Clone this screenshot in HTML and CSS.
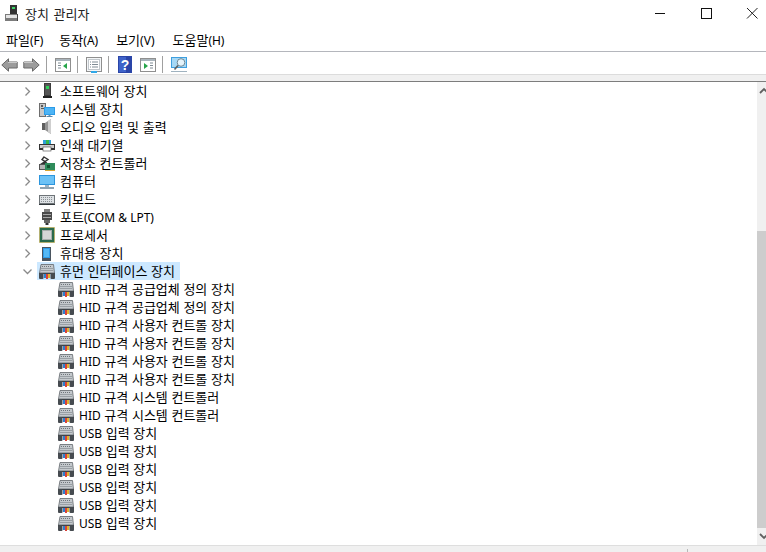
FILE: index.html
```html
<!DOCTYPE html>
<html lang="ko">
<head>
<meta charset="utf-8">
<title>장치 관리자</title>
<link rel="stylesheet" href="styles.css">
</head>
<body>
<svg class="defs" width="0" height="0" aria-hidden="true">
  <defs>
    <symbol id="i-app" viewBox="0 0 16 16">
      <rect x="5" y="0" width="7" height="9" fill="#333"/>
      <rect x="7" y="2" width="3" height="2" fill="#3fd468"/>
      <rect x="0" y="9" width="13" height="7" fill="#7b7b7b"/>
      <rect x="1" y="10" width="11" height="3" fill="#e4e4e4"/>
      <rect x="12" y="9" width="1" height="7" fill="#444"/>
    </symbol>
    <symbol id="i-tower" viewBox="0 0 16 16">
      <rect x="5" y="0" width="7" height="13" fill="#3c3c3c"/>
      <rect x="6" y="1" width="5" height="11" fill="#565656"/>
      <rect x="7" y="3" width="3" height="3" fill="#2fd35a"/>
      <rect x="4" y="13" width="9" height="2" fill="#222"/>
    </symbol>
    <symbol id="i-system" viewBox="0 0 16 16">
      <rect x="0.500" y="2.500" width="6" height="13" fill="#c9c9c9" stroke="#6e6e6e"/>
      <rect x="2" y="4" width="2" height="2" fill="#5a5a5a"/>
      <rect x="2" y="7" width="3" height="1" fill="#5a5a5a"/>
      <rect x="5" y="6" width="11" height="8" fill="#2b9be8"/>
      <rect x="6" y="7" width="9" height="6" fill="#4db4f5"/>
      <rect x="9.500" y="14" width="2" height="1" fill="#6a8fa8"/>
      <rect x="7.500" y="15" width="6" height="1" fill="#5a89ab"/>
    </symbol>
    <symbol id="i-audio" viewBox="0 0 16 16">
      <path d="M3 4h3v7H3z" fill="#5f5f5f"/>
      <path d="M6 4l6-4v15l-6-4z" fill="#949494"/>
      <path d="M9 2l3-2v15l-3-2z" fill="#cfcfcf"/>
    </symbol>
    <symbol id="i-printer" viewBox="0 0 16 16">
      <rect x="4" y="3" width="8" height="4" fill="#2f9fd8"/>
      <rect x="7" y="3" width="3" height="4" fill="#35b84f"/>
      <rect x="0.500" y="7.500" width="15" height="5" fill="#cfcfcf" stroke="#333"/>
      <rect x="1" y="11" width="14" height="2" fill="#333"/>
      <rect x="4" y="10" width="8" height="4" fill="#fff" stroke="#444" stroke-width=".6"/>
    </symbol>
    <symbol id="i-storage" viewBox="0 0 16 16">
      <path d="M5 2l4 2.500-3 2 2 2H3l3-2-3-2z" fill="none" stroke="#333" stroke-width="1.400"/>
      <rect x="0.500" y="9.500" width="7" height="5" fill="#b5b5b5" stroke="#555"/>
      <rect x="6" y="8" width="10" height="7" fill="#2f8c5b"/>
      <rect x="8" y="10" width="3" height="3" fill="#14532f"/>
      <rect x="6" y="15" width="10" height="1" fill="#d9a531"/>
    </symbol>
    <symbol id="i-computer" viewBox="0 0 16 16">
      <rect x="0" y="2" width="16" height="10" fill="#2c95dd"/>
      <rect x="1" y="3" width="14" height="8" fill="#6cc2f6"/>
      <rect x="6" y="12" width="4" height="2" fill="#9db4c4"/>
      <rect x="1" y="14" width="14" height="2" fill="#8ea3b2"/>
    </symbol>
    <symbol id="i-keyboard" viewBox="0 0 16 16">
      <rect x="0" y="4" width="16" height="10" fill="#6e7478"/>
      <rect x="1" y="5" width="14" height="7" fill="#dde1e4"/>
      <path d="M2 6.500h12M2 8.500h12M2 10.500h12" stroke="#8b9196" stroke-dasharray="1 1"/>
      <rect x="0" y="13" width="16" height="1" fill="#33393d"/>
    </symbol>
    <symbol id="i-port" viewBox="0 0 16 16">
      <rect x="5" y="0" width="6" height="3" fill="#808080"/>
      <rect x="3" y="3" width="10" height="8" fill="#4a4a4a"/>
      <rect x="4" y="5" width="8" height="1" fill="#a8a8a8"/>
      <rect x="4" y="8" width="8" height="1" fill="#a8a8a8"/>
      <rect x="5" y="11" width="6" height="3" fill="#666"/>
      <rect x="6.500" y="14" width="3" height="2" fill="#333"/>
    </symbol>
    <symbol id="i-cpu" viewBox="0 0 16 16">
      <rect x="0.500" y="0.500" width="15" height="15" fill="#2a6a4c" stroke="#d3ac3c" stroke-dasharray="1 1"/>
      <rect x="1" y="1" width="14" height="14" fill="#2a6a4c"/>
      <rect x="3" y="3" width="10" height="10" fill="#a9adac"/>
      <rect x="4" y="4" width="8" height="8" fill="#d6d6d6"/>
    </symbol>
    <symbol id="i-mobile" viewBox="0 0 16 16">
      <rect x="3" y="2" width="9" height="14" fill="#4a5560"/>
      <rect x="4" y="3" width="7" height="10" fill="#2f9ce8"/>
      <rect x="5" y="4" width="5" height="8" fill="#55b9f5"/>
    </symbol>
    <symbol id="i-hid" viewBox="0 0 16 16">
      <path d="M2 1.500h12.500l1 8.500H.500z" fill="#c4c9cd" stroke="#5f656a" stroke-width=".8"/>
      <path d="M3 3.500h10M2.500 5.500h11M2.500 7.500h11" stroke="#6f757a" stroke-dasharray="1 1"/>
      <rect x="0" y="10" width="16" height="1" fill="#3f4448"/>
      <rect x="0" y="10" width="4.500" height="6" rx="1" fill="#464b50"/>
      <rect x="11.500" y="10" width="4.500" height="6" rx="1" fill="#464b50"/>
      <rect x="5" y="11" width="2" height="4" fill="#2e7fd0"/>
      <rect x="7" y="11" width="2" height="5" fill="#d9413a"/>
      <rect x="9" y="11" width="2" height="4" fill="#e0b32f"/>
    </symbol>
  </defs>
</svg>
<div class="window">
  <header class="titlebar">
    <svg class="title-icon"><use href="#i-app"/></svg>
    <span class="title-text">장치 관리자</span>
    <div class="controls">
      <svg class="ctl" viewBox="0 0 46 30"><path d="M18 13.500h10" stroke="#111" fill="none"/></svg>
      <svg class="ctl" viewBox="0 0 46 30"><rect x="18.500" y="8.500" width="10" height="10" stroke="#111" fill="none"/></svg>
      <svg class="ctl" viewBox="0 0 46 30"><path d="M18 8l10.500 10.500M28.500 8L18 18.500" stroke="#222" fill="none"/></svg>
    </div>
  </header>
  <nav class="menubar">
    <span class="menu">파일<span class="lat">(F)</span></span>
    <span class="menu wider">동작<span class="lat">(A)</span></span>
    <span class="menu wider">보기<span class="lat">(V)</span></span>
    <span class="menu">도움말<span class="lat">(H)</span></span>
  </nav>
  <div class="toolbar">
    <svg class="arrow" viewBox="0 0 17 14"><path d="M.8 7L7.500 .8V4h8.700v6H7.500v3.200z" fill="#9c9c9c" stroke="#6a6a6a"/><path d="M7 4.500h9" stroke="#c9c9c9"/></svg>
    <svg class="arrow next" viewBox="0 0 17 14"><path d="M16.200 7L9.500 .8V4H.8v6h8.700v3.200z" fill="#9c9c9c" stroke="#6a6a6a"/><path d="M1 4.500h9" stroke="#c9c9c9"/></svg>
    <i class="sep"></i>
    <svg class="tool" viewBox="0 0 16 16"><rect x=".5" y="1.500" width="15" height="13" fill="#fff" stroke="#8f8f8f"/><rect x="1" y="2" width="14" height="2" fill="#a9b4bc"/><path d="M3 6h3M3 8.500h3M3 11h3" stroke="#7f8b94"/><path d="M12 6v6l-4-3z" fill="#27a54a"/></svg>
    <i class="sep"></i>
    <svg class="tool" viewBox="0 0 16 16"><rect x=".5" y=".5" width="15" height="14" fill="#f4f6f8" stroke="#8f8f8f"/><rect x="2.500" y="2.500" width="11" height="10" fill="#fff" stroke="#c2c8cd"/><path d="M4 5h1M6 5h6M4 7.500h1M6 7.500h6M4 10h1M6 10h6" stroke="#7f8b94"/><rect x="5" y="14" width="6" height="2" fill="#2fa8e8"/></svg>
    <i class="sep"></i>
    <svg class="tool help" viewBox="0 0 14 17"><rect width="14" height="17" fill="#2a45a8"/><rect x="1" y="1" width="7" height="15" fill="#3f63c9"/><text x="7" y="13.500" class="help-q">?</text></svg>
    <svg class="tool wide" viewBox="0 0 16 16"><rect x=".5" y="1.500" width="15" height="13" fill="#fff" stroke="#8f8f8f"/><rect x="1" y="2" width="14" height="2" fill="#a9b4bc"/><path d="M10 6h3M10 8.500h3M10 11h3" stroke="#7f8b94"/><path d="M4 6v6l4-3z" fill="#27a54a"/></svg>
    <i class="sep"></i>
    <svg class="tool" viewBox="0 0 16 16"><rect x="0" y="0" width="16" height="11" fill="#3f9fdf"/><rect x="1" y="1" width="14" height="9" fill="#a6d8f5"/><circle cx="10" cy="5.500" r="3.800" fill="#e6f4fb" stroke="#6f8794"/><path d="M7 8.500L3.500 12.500" stroke="#5f5f5f" stroke-width="1.600"/><path d="M0 14.500h16" stroke="#9fb2bf"/></svg>
  </div>
  <div class="band"></div>
  <main class="content">
    <div class="tree">
      <div class="row"><svg class="chev" viewBox="0 0 9 9"><path d="M2.500 .5l4 4-4 4" /></svg><svg class="ico"><use href="#i-tower"/></svg><span class="lbl">소프트웨어 장치</span></div>
      <div class="row"><svg class="chev" viewBox="0 0 9 9"><path d="M2.500 .5l4 4-4 4" /></svg><svg class="ico"><use href="#i-system"/></svg><span class="lbl">시스템 장치</span></div>
      <div class="row"><svg class="chev" viewBox="0 0 9 9"><path d="M2.500 .5l4 4-4 4" /></svg><svg class="ico"><use href="#i-audio"/></svg><span class="lbl">오디오 입력 및 출력</span></div>
      <div class="row"><svg class="chev" viewBox="0 0 9 9"><path d="M2.500 .5l4 4-4 4" /></svg><svg class="ico"><use href="#i-printer"/></svg><span class="lbl">인쇄 대기열</span></div>
      <div class="row"><svg class="chev" viewBox="0 0 9 9"><path d="M2.500 .5l4 4-4 4" /></svg><svg class="ico"><use href="#i-storage"/></svg><span class="lbl">저장소 컨트롤러</span></div>
      <div class="row"><svg class="chev" viewBox="0 0 9 9"><path d="M2.500 .5l4 4-4 4" /></svg><svg class="ico"><use href="#i-computer"/></svg><span class="lbl">컴퓨터</span></div>
      <div class="row"><svg class="chev" viewBox="0 0 9 9"><path d="M2.500 .5l4 4-4 4" /></svg><svg class="ico"><use href="#i-keyboard"/></svg><span class="lbl">키보드</span></div>
      <div class="row"><svg class="chev" viewBox="0 0 9 9"><path d="M2.500 .5l4 4-4 4" /></svg><svg class="ico"><use href="#i-port"/></svg><span class="lbl">포트<span class="lat">(COM &amp; LPT)</span></span></div>
      <div class="row"><svg class="chev" viewBox="0 0 9 9"><path d="M2.500 .5l4 4-4 4" /></svg><svg class="ico"><use href="#i-cpu"/></svg><span class="lbl">프로세서</span></div>
      <div class="row"><svg class="chev" viewBox="0 0 9 9"><path d="M2.500 .5l4 4-4 4" /></svg><svg class="ico"><use href="#i-mobile"/></svg><span class="lbl">휴대용 장치</span></div>
      <div class="row"><svg class="chev" viewBox="0 0 9 9"><path d="M.5 2.500l4 4 4-4" /></svg><div class="selected"><svg class="ico"><use href="#i-hid"/></svg><span class="lbl">휴먼 인터페이스 장치</span></div></div>
      <div class="row child"><svg class="ico"><use href="#i-hid"/></svg><span class="lbl"><span class="lat">HID</span> 규격 공급업체 정의 장치</span></div>
      <div class="row child"><svg class="ico"><use href="#i-hid"/></svg><span class="lbl"><span class="lat">HID</span> 규격 공급업체 정의 장치</span></div>
      <div class="row child"><svg class="ico"><use href="#i-hid"/></svg><span class="lbl"><span class="lat">HID</span> 규격 사용자 컨트롤 장치</span></div>
      <div class="row child"><svg class="ico"><use href="#i-hid"/></svg><span class="lbl"><span class="lat">HID</span> 규격 사용자 컨트롤 장치</span></div>
      <div class="row child"><svg class="ico"><use href="#i-hid"/></svg><span class="lbl"><span class="lat">HID</span> 규격 사용자 컨트롤 장치</span></div>
      <div class="row child"><svg class="ico"><use href="#i-hid"/></svg><span class="lbl"><span class="lat">HID</span> 규격 사용자 컨트롤 장치</span></div>
      <div class="row child"><svg class="ico"><use href="#i-hid"/></svg><span class="lbl"><span class="lat">HID</span> 규격 시스템 컨트롤러</span></div>
      <div class="row child"><svg class="ico"><use href="#i-hid"/></svg><span class="lbl"><span class="lat">HID</span> 규격 시스템 컨트롤러</span></div>
      <div class="row child"><svg class="ico"><use href="#i-hid"/></svg><span class="lbl"><span class="lat">USB</span> 입력 장치</span></div>
      <div class="row child"><svg class="ico"><use href="#i-hid"/></svg><span class="lbl"><span class="lat">USB</span> 입력 장치</span></div>
      <div class="row child"><svg class="ico"><use href="#i-hid"/></svg><span class="lbl"><span class="lat">USB</span> 입력 장치</span></div>
      <div class="row child"><svg class="ico"><use href="#i-hid"/></svg><span class="lbl"><span class="lat">USB</span> 입력 장치</span></div>
      <div class="row child"><svg class="ico"><use href="#i-hid"/></svg><span class="lbl"><span class="lat">USB</span> 입력 장치</span></div>
      <div class="row child"><svg class="ico"><use href="#i-hid"/></svg><span class="lbl"><span class="lat">USB</span> 입력 장치</span></div>
    </div>
    <div class="scrollbar">
      <svg class="sb-arrow" viewBox="0 0 9 17"><path d="M3 11l4-4 4 4" /></svg>
      <div class="sb-track"><div class="sb-thumb"></div></div>
      <svg class="sb-arrow" viewBox="0 0 9 17"><path d="M3 6l4 4 4-4" /></svg>
    </div>
  </main>
  <footer class="statusbar"><i class="status-div"></i></footer>
</div>
</body>
</html>
```

FILE: styles.css
```css
* { box-sizing: border-box; }
html, body { margin: 0; padding: 0; height: 100%; background: #fff; overflow: hidden; }
body {
  font-family: "Noto Sans CJK KR", "Noto Sans", sans-serif;
  font-size: 13px;
  color: #000;
}
.defs { position: absolute; }
.window { display: flex; flex-direction: column; height: 552px; width: 766px; overflow: hidden; }
.lat { font-family: "Noto Sans", sans-serif; font-size: 12px; }

.titlebar { display: flex; align-items: center; height: 30px; flex: none; padding-left: 5px; }
.title-icon { width: 16px; height: 16px; flex: none; margin-top: -4px; }
.title-text { margin-left: 4px; margin-bottom: 4px; color: #222; word-spacing: 1px; }
.controls { display: flex; margin-left: auto; margin-right: -9px; flex: none; }
.ctl { width: 46px; height: 30px; display: block; flex: none; }

.menubar {
  display: flex; align-items: center; height: 22px; flex: none;
  padding: 0 0 3px 6px; gap: 16px;
  border-bottom: 1px solid #b4b6bc;
}
.wider { margin-right: 2px; }

.toolbar { display: flex; align-items: center; height: 22px; flex: none; padding: 3px 0 0 1px; }
.arrow { width: 17px; height: 14px; display: block; flex: none; }
.tool { width: 16px; height: 16px; display: block; flex: none; }
.next { margin-left: 5px; }
.sep { width: 1px; height: 17px; background: #a0a0a0; margin: 0 8px 0 6px; flex: none; }
.help { width: 14px; height: 17px; margin-left: 1px; }
.wide { margin-left: 8px; }
.help-q { font: bold 14px "Liberation Sans", sans-serif; fill: #fff; text-anchor: middle; }

.band { height: 8px; flex: none; background: #f0f0f0; border-top: 1px solid #dcdcdc; border-bottom: 1px solid #7d7d7d; }

.content { flex: 1; display: flex; min-height: 0; }
.tree { flex: 1; overflow: hidden; }
.row { display: flex; align-items: center; height: 18px; padding-left: 23px; white-space: nowrap; }
.chev { width: 9px; height: 9px; flex: none; fill: none; stroke: #8a8a8a; stroke-width: 1.300; margin-right: 7px; }
.ico { width: 16px; height: 16px; flex: none; margin-right: 5px; }
.lbl { margin-bottom: 2px; }
.selected { display: flex; align-items: center; height: 18px; background: #cce8ff; width: 143px; margin-left: -2px; padding-left: 2px; }
.child { padding-left: 58px; }

.scrollbar { width: 9px; flex: none; background: #f0f0f0; display: flex; flex-direction: column; }
.sb-arrow { width: 9px; height: 17px; flex: none; fill: none; stroke: #606060; stroke-width: 1.800; }
.sb-track { flex: 1; display: flex; flex-direction: column; justify-content: flex-end; }
.sb-thumb { height: 297px; background: #cdcdcd; }

.statusbar { height: 7px; flex: none; background: #f0f0f0; border-top: 1px solid #dedede; padding: 3px 0 0 687px; }
.status-div { display: block; width: 1px; height: 3px; background: #b8b8b8; }
```
